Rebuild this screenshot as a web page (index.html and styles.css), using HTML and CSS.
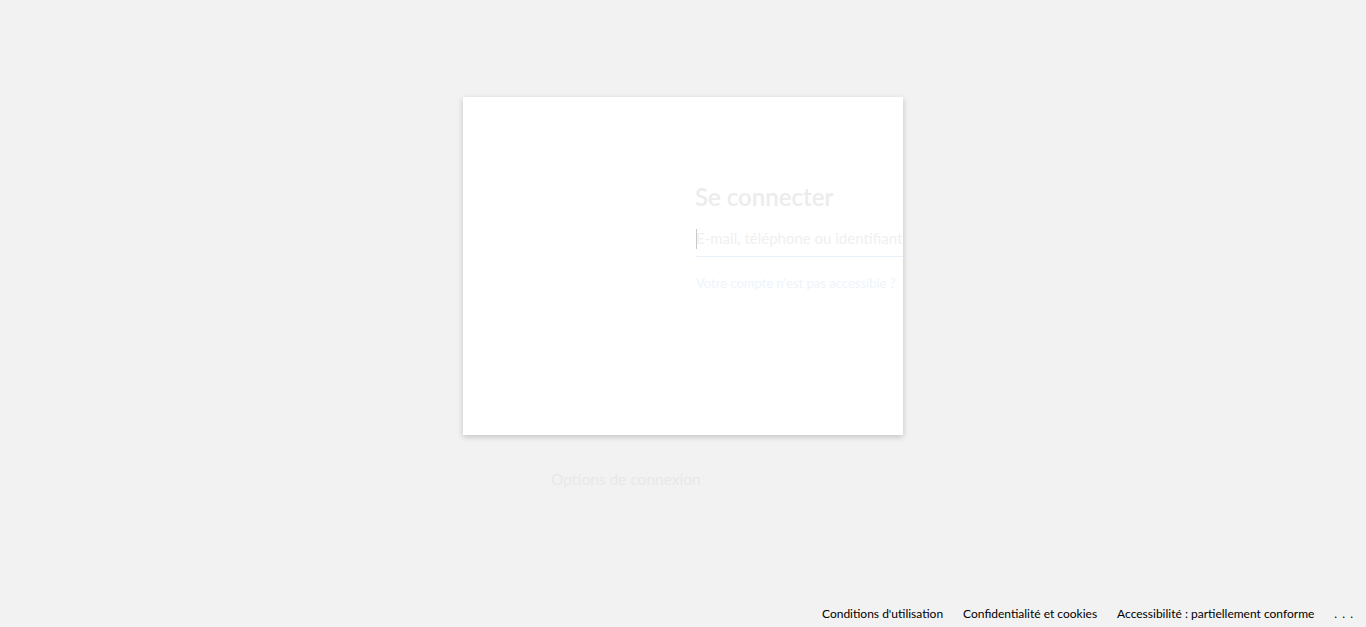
FILE: index.html
```html
<!DOCTYPE html>
<html lang="fr">
<head>
<meta charset="utf-8">
<title>Se connecter</title>
<link rel="stylesheet" href="styles.css">
</head>
<body>
<div class="page">
  <main class="main">
    <section class="card">
      <div class="card-inner">
        <h1 class="title">Se connecter</h1>
        <div class="field">
          <span class="caret"></span>
          <span class="placeholder">E-mail, téléphone ou identifiant Skype</span>
        </div>
        <a class="link" href="#">Votre compte n'est pas accessible ?</a>
      </div>
    </section>
    <div class="options">
      <span class="options-text">Options de connexion</span>
    </div>
  </main>
  <footer class="footer">
    <a href="#">Conditions d'utilisation</a>
    <a href="#">Confidentialité et cookies</a>
    <a href="#">Accessibilité : partiellement conforme</a>
    <a href="#" class="more">. . .</a>
  </footer>
</div>
</body>
</html>
```

FILE: styles.css
```css
html, body {
  margin: 0;
  padding: 0;
}
body {
  background: #f2f2f2;
  font-family: Lato, "Noto Sans", sans-serif;
  color: #1b1b1b;
}
.page {
  height: 627px;
  display: flex;
  flex-direction: column;
  overflow: hidden;
}
.main {
  flex: 1;
  display: flex;
  flex-direction: column;
  align-items: center;
  padding-top: 97px;
}
.card {
  box-sizing: border-box;
  width: 440px;
  height: 338px;
  background: #fff;
  box-shadow: 0 2px 6px rgba(0, 0, 0, 0.2);
  overflow: hidden;
}
.card-inner {
  padding: 86px 0 0 232px;
  white-space: nowrap;
}
.title {
  margin: 0;
  font-size: 24px;
  line-height: 28px;
  font-weight: 600;
  color: #ececec;
}
.field {
  position: relative;
  margin-top: 11px;
  margin-left: 1px;
  height: 34px;
  border-bottom: 1px solid #e8f1fa;
  display: flex;
  align-items: center;
}
.caret {
  position: absolute;
  left: 0;
  top: 7px;
  width: 1px;
  height: 20px;
  background: #c9c9c9;
}
.placeholder {
  font-size: 15px;
  line-height: 20px;
  margin-top: -2px;
  color: #f0f0f0;
}
.link {
  display: block;
  margin-top: 18px;
  margin-left: 1px;
  font-size: 13px;
  line-height: 16px;
  color: #eef4fb;
  text-decoration: none;
}
.options {
  box-sizing: border-box;
  width: 440px;
  height: 47px;
  margin-top: 20px;
  margin-right: 2px;
  background: #f2f2f2;
  box-shadow: 0 0 3px rgba(0, 0, 0, 0.02);
  display: flex;
  align-items: center;
  padding-left: 89px;
}
.options-text {
  font-size: 15.5px;
  color: #e8e8e8;
}
.footer {
  display: flex;
  justify-content: flex-end;
  align-items: center;
  height: 28px;
  padding-right: 12px;
  font-size: 12px;
}
.footer a {
  color: #000;
  text-decoration: none;
  margin-left: 20px;
  white-space: nowrap;
}
.footer .more {
  letter-spacing: 1px;
}
```
